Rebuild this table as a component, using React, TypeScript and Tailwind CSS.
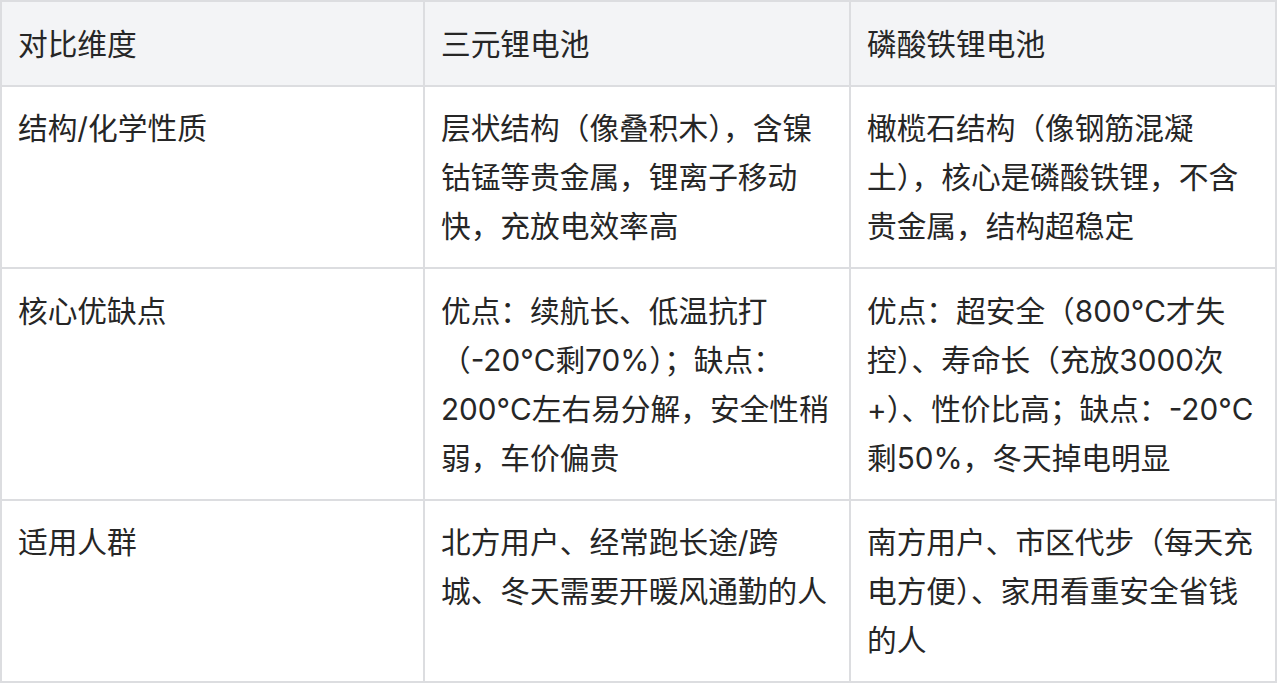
import React from "react";

const header = ["对比维度", "三元锂电池", "磷酸铁锂电池"];

const rows: string[][] = [
  [
    "结构/化学性质",
    "层状结构（像叠积木），含镍钴锰等贵金属，锂离子移动快，充放电效率高",
    "橄榄石结构（像钢筋混凝土），核心是磷酸铁锂，不含贵金属，结构超稳定",
  ],
  [
    "核心优缺点",
    "优点：续航长、低温抗打（-20°C剩70%）；缺点：200°C左右易分解，安全性稍弱，车价偏贵",
    "优点：超安全（800°C才失控）、寿命长（充放3000次+）、性价比高；缺点：-20°C剩50%，冬天掉电明显",
  ],
  [
    "适用人群",
    "北方用户、经常跑长途/跨城、冬天需要开暖风通勤的人",
    "南方用户、市区代步（每天充电方便）、家用看重安全省钱的人",
  ],
];

function Cell({ children, head }: { children: React.ReactNode; head?: boolean }) {
  return (
    <div
      className={
        (head ? "bg-[#f3f4f6] " : "bg-white ") +
        "border-r-2 border-b-2 border-[#dcdde0] px-4 pt-[17.5px] pb-[16px]"
      }
    >
      {children}
    </div>
  );
}

export default function App() {
  return (
    <div className="w-[1280px] h-[687px] bg-white font-[family-name:Inter,'Noto_Sans_CJK_SC',sans-serif]">
      <div className="w-[1277px] grid grid-cols-[423px_426px_426px] border-l-2 border-t-2 border-[#dcdde0] text-[29.7px] leading-[49px] text-[#262626]">
        {header.map((h) => (
          <Cell key={h} head>
            {h}
          </Cell>
        ))}
        {rows.map((r, ri) => r.map((c, ci) => <Cell key={ri + "-" + ci}>{c}</Cell>))}
      </div>
    </div>
  );
}
